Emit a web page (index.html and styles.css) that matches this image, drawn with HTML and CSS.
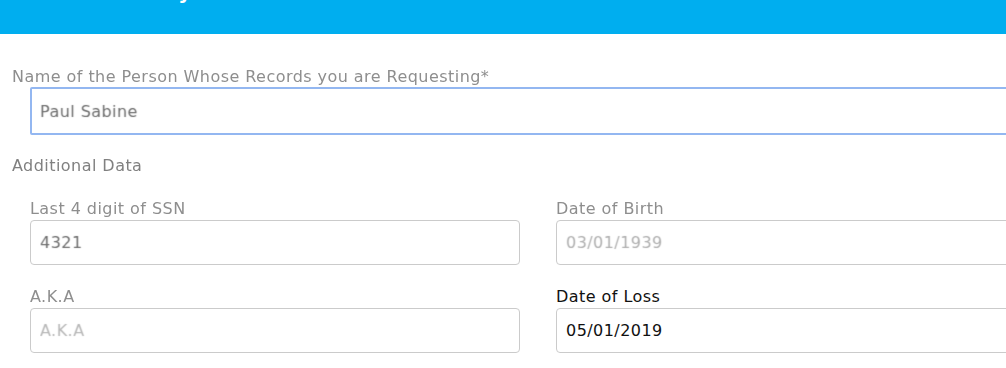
FILE: index.html
```html
<!DOCTYPE html>
<html lang="en">
<head>
  <meta charset="UTF-8">
  <meta name="viewport" content="width=device-width, initial-scale=1.0">
  <title>Records Request</title>
  <link rel="stylesheet" href="styles.css">
</head>
<body>
  <header class="topbar">
    <h1>Records History</h1>
  </header>
  <form class="request-form">
    <label class="field-label soft" for="person">Name of the Person Whose Records you are Requesting*</label>
    <input class="field-input wide focused" id="person" type="text" value="Paul Sabine">

    <div class="section-title soft">Additional Data</div>

    <div class="fields">
      <div class="field">
        <label class="field-label soft" for="ssn">Last 4 digit of SSN</label>
        <input class="field-input" id="ssn" type="text" value="4321">
      </div>
      <div class="field">
        <label class="field-label soft" for="dob">Date of Birth</label>
        <input class="field-input faded" id="dob" type="text" value="03/01/1939">
      </div>
      <div class="field">
        <label class="field-label soft" for="aka">A.K.A</label>
        <input class="field-input" id="aka" type="text" placeholder="A.K.A">
      </div>
      <div class="field">
        <label class="field-label dark" for="dol">Date of Loss</label>
        <input class="field-input dark" id="dol" type="text" value="05/01/2019">
      </div>
    </div>
  </form>
</body>
</html>
```

FILE: styles.css
```css
body {
  margin: 0;
  background: #fff;
  font-family: "DejaVu Sans", Verdana, sans-serif;
  overflow: hidden;
}

.topbar {
  display: flex;
  align-items: flex-start;
  height: 34px;
  background: #00aeef;
  padding-left: 12px;
}

.topbar h1 {
  margin: -20px 0 0;
  font-size: 20px;
  line-height: 24px;
  font-weight: bold;
  color: #fff;
}

.request-form {
  padding: 33px 0 0 12px;
  width: 1100px;
  letter-spacing: 0.45px;
}

.field-label {
  display: block;
  font-size: 16px;
  line-height: 19px;
  color: #8e8e8e;
  margin-bottom: 2px;
}

.request-form > .field-label {
  margin-bottom: 1px;
}

.section-title {
  font-size: 16px;
  line-height: 19px;
  color: #808080;
  margin: 21px 0 24px;
}

/* the screenshot is soft everywhere except the last field */
.soft {
  filter: blur(0.5px);
}

.field-input {
  display: block;
  box-sizing: border-box;
  width: 490px;
  height: 45px;
  padding: 0 9px;
  border: 1px solid #cbcbcb;
  border-radius: 4px;
  font-family: "DejaVu Sans", Verdana, sans-serif;
  font-size: 16px;
  letter-spacing: 0.45px;
  color: transparent;
  text-shadow: 0 0 1px #707070;
  background: #fff;
  outline: none;
}

.field-input::placeholder {
  color: transparent;
  text-shadow: 0 0 1px #b8b8b8;
}

.field-input.wide {
  width: 1020px;
  height: 48px;
  margin-left: 18px;
  padding-left: 8px;
  border-radius: 2px;
}

.field-input.focused {
  border: 2px solid #93b7f1;
}

.field-input.faded {
  text-shadow: 0 0 1px #b0b0b0;
}

.fields {
  display: grid;
  grid-template-columns: 490px 490px;
  column-gap: 36px;
  row-gap: 22px;
  margin-left: 18px;
}

.field-label.dark {
  color: #111;
}

.field-input.dark {
  color: #111;
  text-shadow: none;
}
```
